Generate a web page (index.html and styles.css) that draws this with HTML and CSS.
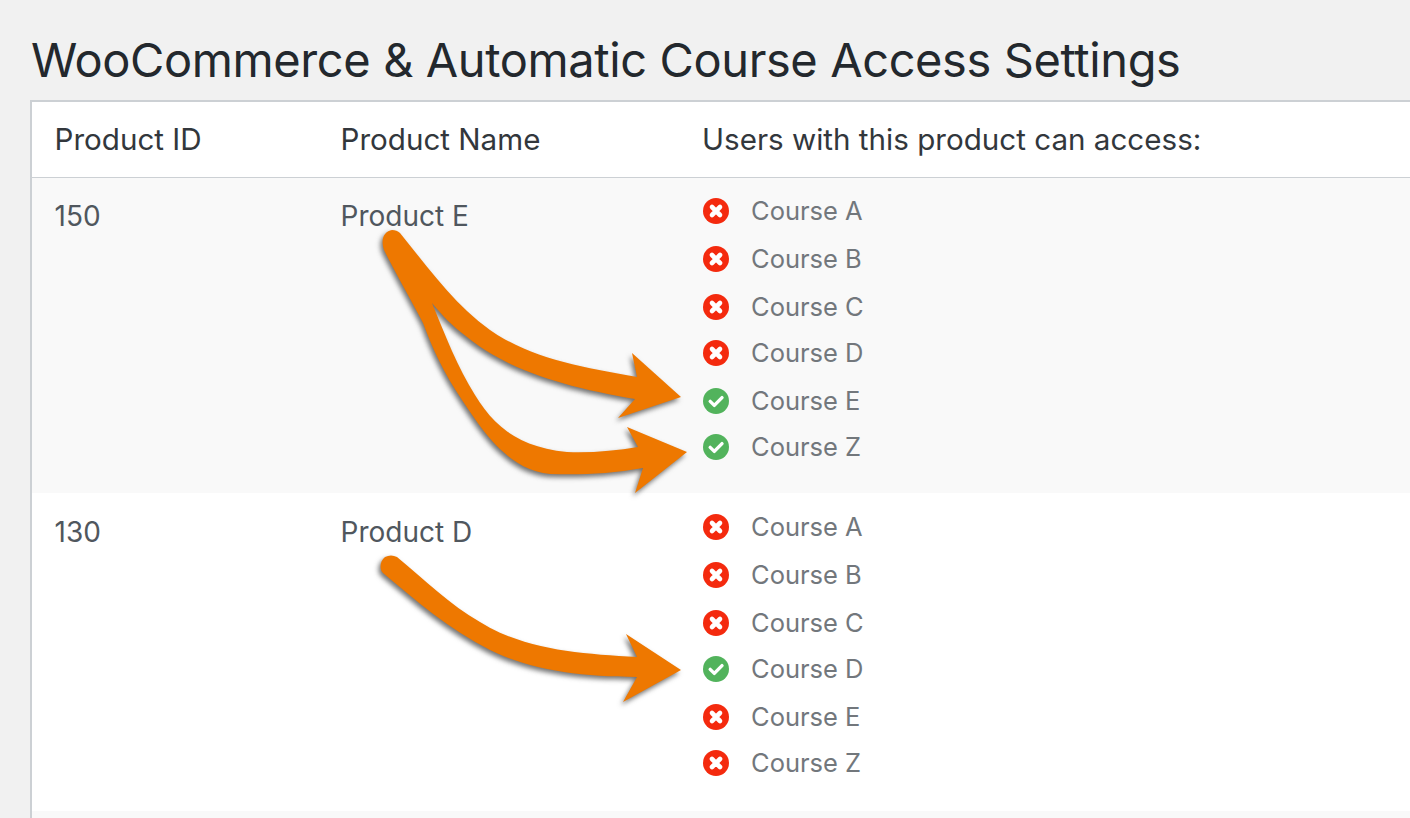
FILE: index.html
```html
<!DOCTYPE html>
<html lang="en">
<head>
<meta charset="utf-8">
<title>WooCommerce &amp; Automatic Course Access Settings</title>
<link rel="stylesheet" href="styles.css">
</head>
<body>
<svg width="0" height="0" class="defs">
  <symbol id="no" viewBox="0 0 26 26"><circle cx="13" cy="13" r="13" fill="#f42a0e"/><path d="M9 9 17 17M17 9 9 17" stroke="#fff" stroke-width="4.6" stroke-linecap="round"/></symbol>
  <symbol id="yes" viewBox="0 0 26 26"><circle cx="13" cy="13" r="13" fill="#52b35c"/><path d="M7.2 13.4 11.3 17.4 19 9.6" stroke="#fff" stroke-width="3.4" fill="none" stroke-linecap="round" stroke-linejoin="round"/></symbol>
</svg>
<main class="page">
  <h1 class="title">WooCommerce &amp; Automatic Course Access Settings</h1>
  <table class="settings">
    <thead>
      <tr><th class="col-id">Product ID</th><th class="col-name">Product Name</th><th>Users with this product can access:</th></tr>
    </thead>
    <tbody>
      <tr class="row-a">
        <td>150</td><td>Product E</td>
        <td><ul class="courses">
          <li><svg class="ic"><use href="#no"/></svg>Course A</li>
          <li><svg class="ic"><use href="#no"/></svg>Course B</li>
          <li><svg class="ic"><use href="#no"/></svg>Course C</li>
          <li><svg class="ic"><use href="#no"/></svg>Course D</li>
          <li><svg class="ic"><use href="#yes"/></svg>Course E</li>
          <li><svg class="ic"><use href="#yes"/></svg>Course Z</li>
        </ul></td>
      </tr>
      <tr class="row-b">
        <td>130</td><td>Product D</td>
        <td><ul class="courses">
          <li><svg class="ic"><use href="#no"/></svg>Course A</li>
          <li><svg class="ic"><use href="#no"/></svg>Course B</li>
          <li><svg class="ic"><use href="#no"/></svg>Course C</li>
          <li><svg class="ic"><use href="#yes"/></svg>Course D</li>
          <li><svg class="ic"><use href="#no"/></svg>Course E</li>
          <li><svg class="ic"><use href="#no"/></svg>Course Z</li>
        </ul></td>
      </tr>
      <tr class="row-c"><td colspan="3"></td></tr>
    </tbody>
  </table>
  <svg class="arrows" viewBox="0 0 1410 818" width="1410" height="818" aria-hidden="true">
    <path class="arrow" d="M400 233C430 270 455 305 490 330C530 358 580 367 637 377L632 353L681 397L618 418L635 399C570 388 510 372 467 337C452 326 442 315 432 303C445 335 458 368 475 395C495 428 520 447 567 452C590 453 615 451 638 447L627 427L687 452L635 493L643 468C610 474 580 475 550 474C510 470 485 435 462 400C445 375 433 350 423 323C410 298 395 272 384 250C380 238 385 231 392 230C395 230 398 231 400 233Z"/>
    <path class="arrow" d="M397 557C425 580 450 605 480 622C525 650 580 654 637 657L626 634L681 670L623 702L637 677C580 677 530 670 490 650C450 630 415 600 383 573C379 569 380 561 385 557C389 555 393 555 397 557Z"/>
  </svg>
</main>
</body>
</html>
```

FILE: styles.css
```css
html, body {
  margin: 0;
  height: 100%;
  overflow: hidden;
  background: #f1f1f1;
}

body {
  font-family: Inter, "Liberation Sans", sans-serif;
}

.defs {
  position: absolute;
}

.page {
  position: relative;
  height: 818px;
  padding-left: 30px;
  box-sizing: border-box;
}

.title {
  margin: 0;
  padding: 31px 0 0 1px;
  height: 100px;
  box-sizing: border-box;
  font-size: 47px;
  line-height: 58px;
  font-weight: 400;
  letter-spacing: -.4px;
  color: #23282d;
  white-space: nowrap;
}

.settings {
  width: 1380px;
  border-collapse: separate;
  border-spacing: 0;
  table-layout: fixed;
  background: #fff;
  border-top: 2px solid #ccd0d4;
  border-left: 2px solid #ccd0d4;
}

.settings th {
  height: 73px;
  padding: 0 0 2px 22.5px;
  text-align: left;
  font-size: 29.6px;
  font-weight: 400;
  color: #32373c;
  border-bottom: 1px solid #ccd0d4;
}

.col-id {
  width: 263.5px;
}

.col-name {
  width: 339px;
}

.settings td {
  padding: 20px 0 0 22.5px;
  vertical-align: top;
  font-size: 28px;
  line-height: 36px;
  color: #50575e;
}

.row-a {
  background: #f9f9f9;
  height: 315px;
}

.row-b {
  height: 318px;
}

.settings .row-b td {
  padding-top: 21px;
}

.row-c {
  background: #f9f9f9;
  height: 40px;
}

.settings td .courses {
  list-style: none;
  margin: -11px 0 0;
  padding: 0;
}

.courses li {
  display: flex;
  align-items: center;
  gap: 22px;
  height: 47px;
  margin-top: 1px;
  padding-left: 1px;
  font-size: 25.5px;
  color: #72777c;
}

/* the source list has uneven row spacing */
.courses li:nth-child(4),
.courses li:nth-child(6) {
  margin-top: -1px;
}

.courses li:first-child {
  margin-top: 0;
}

.ic {
  width: 26px;
  height: 26px;
  flex: none;
}

.arrows {
  position: absolute;
  left: 0;
  top: 0;
  pointer-events: none;
}

.arrow {
  fill: #ee7800;
  filter: drop-shadow(-2px 3px 2.5px rgba(40, 40, 40, .65));
}
```
